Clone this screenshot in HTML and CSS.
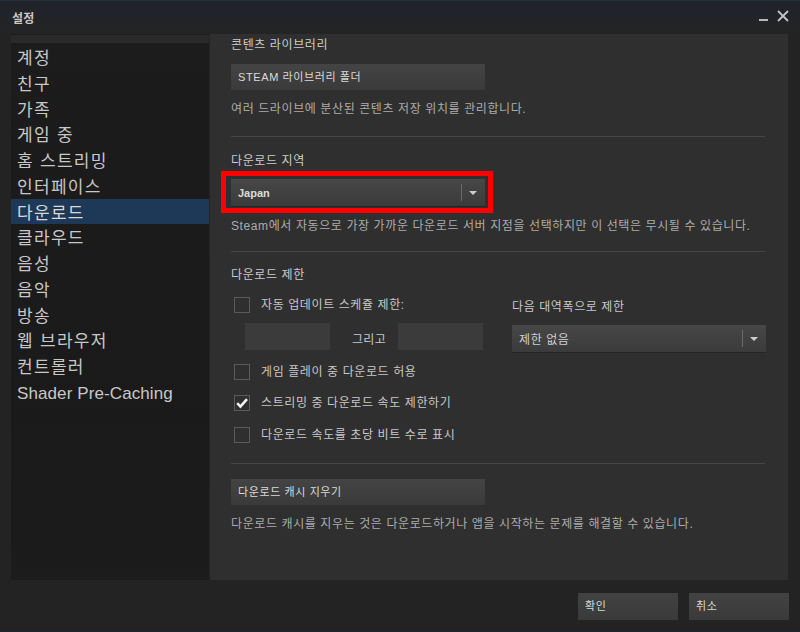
FILE: index.html
```html
<!DOCTYPE html>
<html lang="ko">
<head>
<meta charset="utf-8">
<title>설정</title>
<link rel="stylesheet" href="styles.css">
</head>
<body>
<div class="window">
  <div class="titlebar">
    <span class="title">설정</span>
    <div class="winbtns">
      <svg class="minimize" width="10" height="12" viewBox="0 0 10 12"><rect x="0" y="9" width="9" height="2" fill="#b9b9b9"/></svg>
      <svg class="close" width="12" height="12" viewBox="0 0 12 12"><path d="M1 1 L11 11 M11 1 L1 11" stroke="#c4c4c4" stroke-width="1.8" fill="none"/></svg>
    </div>
  </div>
  <div class="main">
    <nav class="sidebar">
      <div class="sidebar-top"></div>
      <ul class="menu">
        <li>계정</li>
        <li>친구</li>
        <li>가족</li>
        <li>게임 중</li>
        <li>홈 스트리밍</li>
        <li>인터페이스</li>
        <li class="active">다운로드</li>
        <li>클라우드</li>
        <li>음성</li>
        <li>음악</li>
        <li>방송</li>
        <li>웹 브라우저</li>
        <li>컨트롤러</li>
        <li class="latin">Shader Pre-Caching</li>
      </ul>
    </nav>
    <section class="content">
      <h2 class="heading first">콘텐츠 라이브러리</h2>
      <div class="btn wide mt11">STEAM 라이브러리 폴더</div>
      <p class="desc mt11">여러 드라이브에 분산된 콘텐츠 저장 위치를 관리합니다.</p>
      <div class="sep sep1"></div>

      <h2 class="heading mt16">다운로드 지역</h2>
      <div class="highlight">
        <div class="select wide">
          <span class="select-text">Japan</span>
          <span class="select-div"></span>
          <span class="select-arrow"></span>
        </div>
      </div>
      <p class="desc mt12">Steam에서 자동으로 가장 가까운 다운로드 서버 지점을 선택하지만 이 선택은 무시될 수 있습니다.</p>
      <div class="sep sep2"></div>

      <h2 class="heading mt15">다운로드 제한</h2>
      <div class="limits">
        <div class="limits-left">
          <label class="check">
            <span class="box"></span>
            <span class="label">자동 업데이트 스케쥴 제한:</span>
          </label>
          <div class="times">
            <span class="field"></span>
            <span class="and">그리고</span>
            <span class="field"></span>
          </div>
        </div>
        <div class="limits-right">
          <div class="label right-label">다음 대역폭으로 제한</div>
          <div class="select wide mt10">
            <span class="select-text plain">제한 없음</span>
            <span class="select-div"></span>
            <span class="select-arrow"></span>
          </div>
        </div>
      </div>
      <label class="check row r1">
        <span class="box"></span>
        <span class="label">게임 플레이 중 다운로드 허용</span>
      </label>
      <label class="check row r2">
        <span class="box checked"><svg width="14" height="14" viewBox="0 0 14 14"><path d="M2.2 7.2 L5.4 10.6 L12 3.2" stroke="#f2f2f2" stroke-width="2.6" fill="none"/></svg></span>
        <span class="label">스트리밍 중 다운로드 속도 제한하기</span>
      </label>
      <label class="check row r3">
        <span class="box"></span>
        <span class="label">다운로드 속도를 초당 비트 수로 표시</span>
      </label>
      <div class="sep sep3"></div>
      <div class="btn wide mt15">다운로드 캐시 지우기</div>
      <p class="desc mt11">다운로드 캐시를 지우는 것은 다운로드하거나 앱을 시작하는 문제를 해결할 수 있습니다.</p>
    </section>
  </div>
  <div class="footer">
    <div class="btn fbtn">확인</div>
    <div class="btn fbtn">취소</div>
  </div>
</div>
</body>
</html>
```

FILE: styles.css
```css
* { box-sizing: border-box; }

html, body {
  margin: 0;
  padding: 0;
}

body {
  width: 800px;
  height: 632px;
  overflow: hidden;
  background: #232323;
  font-family: "Liberation Sans", "Noto Sans CJK KR", sans-serif;
  color: #c6c6c6;
}

.window {
  display: flex;
  flex-direction: column;
  width: 800px;
  height: 632px;
  background: #232323;
  border-top: 1px solid #24303c;
  border-bottom: 1px solid #1d2834;
}

.titlebar {
  height: 33px;
  flex: none;
  display: flex;
  align-items: center;
  justify-content: space-between;
  padding-left: 12px;
  padding-right: 11px;
  background: linear-gradient(#1f232a, #232425);
}

.title {
  font-size: 12px;
  font-weight: bold;
  color: #c8c8c8;
  margin-top: -1px;
  letter-spacing: 0.3px;
}

.winbtns {
  display: flex;
  align-items: center;
  gap: 8px;
  margin-top: -3px;
}

.main {
  flex: none;
  height: 546px;
  display: flex;
  padding-left: 11px;
  padding-right: 12px;
}

.sidebar {
  width: 198px;
  margin-right: 1px;
  background: linear-gradient(#1c1c1c, #1a1a1a 70%, #1c1c1c);
  display: flex;
  flex-direction: column;
}

.sidebar-top {
  height: 8px;
  background: #2a2a2a;
  margin-top: 1px;
}

.menu {
  list-style: none;
  margin: 1px 0 0 0;
  padding: 0;
}

.menu li {
  height: 25.77px;
  line-height: 25.77px;
  padding-left: 6px;
  font-size: 17px;
  letter-spacing: 1.3px;
  color: #c8c8c8;
  white-space: nowrap;
  padding-top: 2px;
}

.menu li.active {
  background: #1d3957;
  color: #d8d8d8;
}

.menu li.latin {
  letter-spacing: 0.1px;
}

.content {
  width: 578px;
  background: #2f2f2f;
  padding: 3px 22px 0 21px;
}

.heading {
  margin: 0;
  font-size: 12px;
  font-weight: normal;
  line-height: 16px;
  letter-spacing: 0.6px;
  color: #cccccc;
}

.desc {
  margin: 0;
  font-size: 12px;
  line-height: 16px;
  letter-spacing: 0.6px;
  color: #acacac;
  white-space: nowrap;
}

.mt10 { margin-top: 10px; }
.mt11 { margin-top: 11px; }
.mt12 { margin-top: 12px; }
.mt15 { margin-top: 15px; }
.mt16 { margin-top: 16px; }

.sep {
  height: 1px;
  background: #454545;
  margin-right: 1px;
}

.sep1 { margin-top: 19px; }
.sep2 { margin-top: 17px; }
.sep3 { margin-top: 20px; }

.btn {
  height: 26px;
  line-height: 26px;
  padding-left: 7px;
  font-size: 11px;
  font-weight: normal;
  letter-spacing: 0.6px;
  color: #dadada;
  background: linear-gradient(#444444, #3a3a3a);
  white-space: nowrap;
}

.wide { width: 254px; }

.highlight {
  position: relative;
  margin-top: 10px;
  width: 254px;
}

.highlight::after {
  content: "";
  position: absolute;
  left: -10px;
  top: -8px;
  right: -8px;
  bottom: -7px;
  border: 5px solid #ff0000;
}

.select {
  height: 27px;
  display: flex;
  align-items: center;
  background: linear-gradient(#474747, #3b3b3b);
  box-shadow: 0 1px 0 #262626;
  padding-left: 7px;
}

.select-text {
  flex: 1;
  font-size: 11px;
  font-weight: bold;
  color: #dcdcdc;
}

.select-text.plain {
  font-size: 12px;
  font-weight: normal;
  letter-spacing: 0.6px;
  color: #cfcfcf;
}

.select-div {
  width: 1px;
  height: 17px;
  background: #6a6a6a;
  margin-right: 7px;
}

.select-arrow {
  width: 0;
  height: 0;
  border-left: 4px solid transparent;
  border-right: 4px solid transparent;
  border-top: 4px solid #cccccc;
  margin-right: 8px;
  margin-top: 1px;
}

.limits {
  display: flex;
  margin-top: 14px;
}

.limits-left {
  width: 281px;
}

.limits-right {
  width: 254px;
}

.right-label {
  margin-top: 2px;
}

.check {
  display: flex;
  align-items: center;
  height: 16px;
  padding-left: 3px;
}

.box {
  width: 16px;
  height: 16px;
  border: 1px solid #5a5a5a;
  flex: none;
  display: flex;
  align-items: center;
  justify-content: center;
}

.label {
  font-size: 12px;
  line-height: 16px;
  letter-spacing: 0.6px;
  color: #c8c8c8;
  white-space: nowrap;
}

.check .label {
  margin-left: 11px;
}

.times {
  display: flex;
  margin-top: 10px;
  padding-left: 14px;
  height: 27px;
  align-items: center;
}

.field {
  width: 85px;
  height: 27px;
  background: #3b3b3b;
}

.and {
  width: 68px;
  padding-left: 22px;
  font-size: 12px;
  letter-spacing: 0.3px;
  color: #c8c8c8;
  margin-top: 3px;
}

.row.r1 { margin-top: 12px; }
.row.r2 { margin-top: 15px; }
.row.r3 { margin-top: 16px; }

.footer {
  flex: 1;
  display: flex;
  justify-content: flex-end;
  align-items: flex-start;
  gap: 11px;
  padding-top: 13px;
  padding-right: 11px;
}

.fbtn {
  width: 100px;
  height: 27px;
  line-height: 27px;
  background: linear-gradient(#424242, #3a3a3a);
}
```
